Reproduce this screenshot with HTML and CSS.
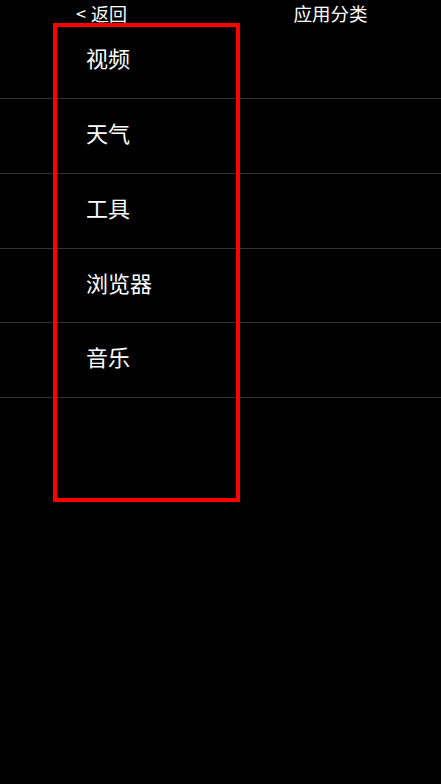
FILE: index.html
```html
<!DOCTYPE html>
<html lang="zh-CN">
<head>
<meta charset="utf-8">
<link rel="stylesheet" href="styles.css">
</head>
<body>
<div class="screen">
  <header class="topbar">
    <div class="back"><span class="chev">&lt;</span>返回</div>
    <div class="title">应用分类</div>
  </header>
  <ul class="list">
    <li class="row">视频</li>
    <li class="row">天气</li>
    <li class="row">工具</li>
    <li class="row">浏览器</li>
    <li class="row">音乐</li>
  </ul>
  <div class="highlight"></div>
</div>
</body>
</html>
```
FILE: styles.css
```css
html, body {
  margin: 0;
  padding: 0;
  background: #000;
}
.screen {
  position: relative;
  width: 441px;
  height: 784px;
  background: #000;
  color: #fff;
  font-family: "Noto Sans CJK SC", "Noto Sans", sans-serif;
  overflow: hidden;
}
.topbar {
  display: flex;
  height: 24px;
  font-size: 18px;
  line-height: 26px;
}
.back {
  width: 220px;
  box-sizing: border-box;
  padding-left: 76px;
}
.chev {
  margin-right: 5px;
}
.title {
  flex: 1;
  text-align: center;
  font-size: 18.5px;
}
.list {
  list-style: none;
  margin: 0;
  padding: 0;
}
.row {
  height: 74px;
  border-bottom: 1px solid #333;
  box-sizing: content-box;
  padding-left: 86px;
  font-size: 22px;
  line-height: 66px;
}
.row:nth-child(4) {
  height: 73px;
}
.highlight {
  position: absolute;
  left: 53px;
  top: 23px;
  width: 179px;
  height: 471px;
  border: 4px solid #ff0000;
}
```
